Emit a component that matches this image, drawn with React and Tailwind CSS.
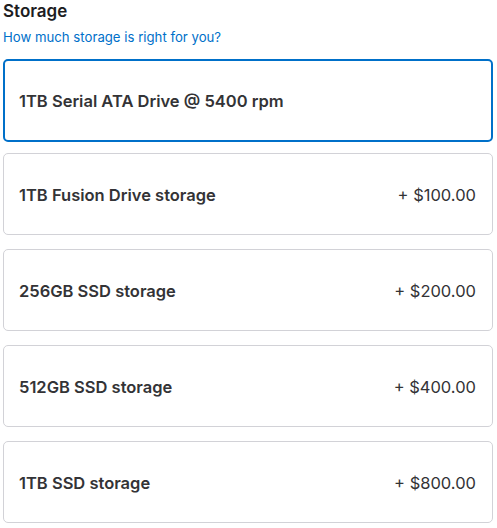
export default function App() {
  const opts = [
    { name: "1TB Fusion Drive storage", price: "+ $100.00" },
    { name: "256GB SSD storage", price: "+ $200.00" },
    { name: "512GB SSD storage", price: "+ $400.00" },
    { name: "1TB SSD storage", price: "+ $800.00" },
  ];
  return (
    <div className="w-[497px] h-[528px] bg-white pl-[3px] pr-[4px]" style={{ fontFamily: "Inter, 'Noto Sans', sans-serif" }}>
      <div className="pt-[1px] text-[17px] leading-[20px] font-semibold text-[#1d1d1f]">Storage</div>
      <div className="mt-[9px] text-[13.2px] leading-[15px] text-[#0070c9]">How much storage is right for you?</div>
      <div className="mt-[14px] h-[83px] rounded-[5px] border-2 border-[#0070c9] flex items-center pl-[14px] pr-[16px]">
        <span className="text-[16.5px] leading-[20px] pt-[1px] font-semibold text-[#333336]">1TB Serial ATA Drive @ 5400 rpm</span>
      </div>
      <div className="mt-[11px] flex flex-col gap-[14px]">
        {opts.map((o) => (
          <div
            key={o.name}
            className="h-[82px] rounded-[5px] border border-[#d2d2d7] flex items-center justify-between pl-[15px] pr-[16px]"
          >
            <span className="text-[16.5px] leading-[20px] pt-[2px] font-semibold text-[#333336]">{o.name}</span>
            <span className="text-[16.5px] leading-[20px] pt-[2px] text-[#333336]">{o.price}</span>
          </div>
        ))}
      </div>
    </div>
  );
}
